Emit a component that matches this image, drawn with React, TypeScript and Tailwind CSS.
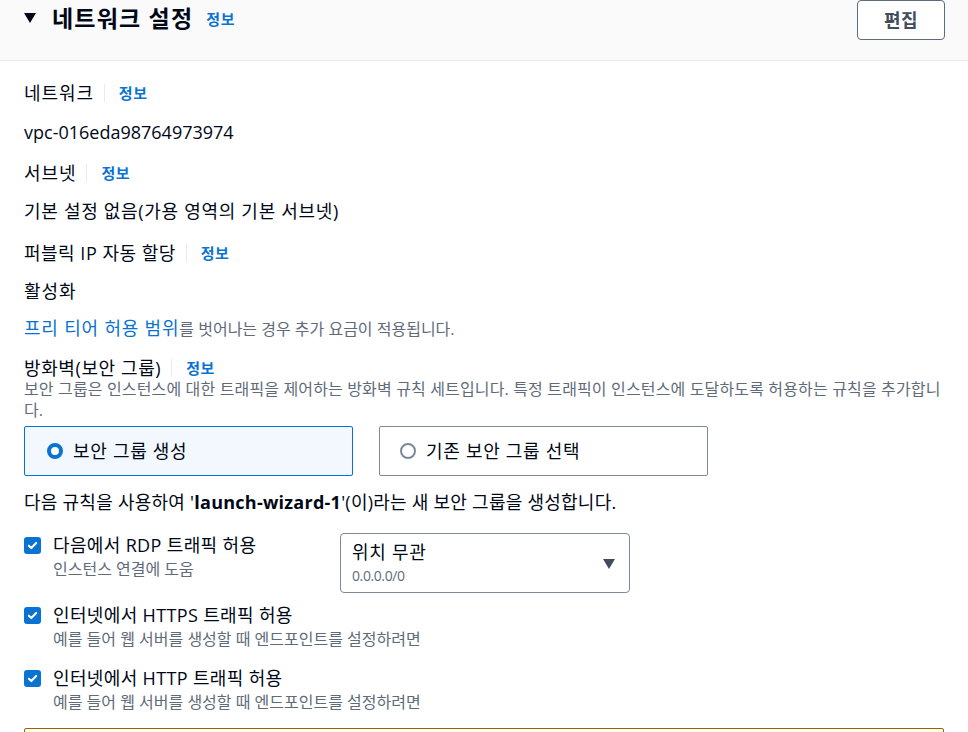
import React from "react";

const font = { fontFamily: '"Open Sans", "Noto Sans CJK KR", sans-serif' };

function Info({ gap = "ml-[10px]" }: { gap?: string }) {
  return (
    <span className={`${gap} flex items-center`}>
      <span className="h-[18px] w-px bg-[#e9ebed]" />
      <a className="ml-[14px] text-[15px] font-bold tracking-[0.5px] text-[#0972d3] leading-[22px]">정보</a>
    </span>
  );
}

function Check() {
  return (
    <span className="mt-[3px] flex h-[17px] w-[17px] shrink-0 items-center justify-center rounded-[3px] bg-[#0972d3]">
      <svg viewBox="0 0 12 12" className="h-[11px] w-[11px]" fill="none">
        <path d="M2 6.2l2.7 2.6L10 3.2" stroke="#fff" strokeWidth="2.2" strokeLinecap="round" strokeLinejoin="round" />
      </svg>
    </span>
  );
}

function CheckRow({ label, desc }: { label: string; desc: string }) {
  return (
    <div className="flex gap-3">
      <Check />
      <div>
        <div className="text-[18px] leading-[22px] tracking-[0.35px] text-[#000716]">{label}</div>
        <div className="text-[16px] leading-[20px] text-[#5f6b7a] mt-[3px]">{desc}</div>
      </div>
    </div>
  );
}

export default function App() {
  return (
    <div className="min-h-screen bg-white text-[#000716]" style={font}>
      <div className="flex h-[61px] items-start justify-between border-b border-[#e9ebed] bg-[#fafafa] pl-6 pr-[23px]">
        <div className="flex items-center pt-[4px]">
          <svg viewBox="0 0 12 10" className="h-[10px] w-[12px]">
            <path d="M0 0h12L6 10z" fill="#000716" />
          </svg>
          <h2 className="ml-4 text-[23px] font-bold leading-[28px] tracking-[1.2px]">네트워크 설정</h2>
          <a className="ml-[13px] mt-[3px] text-[15px] font-bold tracking-[0.5px] text-[#0972d3]">정보</a>
        </div>
        <button className="h-[40px] w-[88px] rounded-[4px] border border-[#5f6b7a] bg-white text-[18px] font-bold tracking-[0.5px] text-[#414d5c]">
          편집
        </button>
      </div>

      <div className="px-6 pt-[21px]">
        <div className="flex items-center leading-[22px]">
          <span className="text-[18px] tracking-[0.9px]">네트워크</span>
          <Info />
        </div>
        <div className="mt-[17px] text-[18px] leading-[22px]">vpc-016eda98764973974</div>

        <div className="mt-[19px] flex items-center leading-[22px]">
          <span className="text-[18px] tracking-[0.9px]">서브넷</span>
          <Info />
        </div>
        <div className="mt-[16px] text-[18px] leading-[22px] tracking-[0.7px]">기본 설정 없음(가용 영역의 기본 서브넷)</div>

        <div className="mt-[20px] flex items-center leading-[22px]">
          <span className="text-[18px] tracking-[0.5px]">퍼블릭 IP 자동 할당</span>
          <Info />
        </div>
        <div className="mt-[16px] text-[18px] leading-[22px] tracking-[0.9px]">활성화</div>

        <div className="mt-[15px] leading-[22px]">
          <a className="text-[18px] tracking-[0.8px] text-[#0972d3]">프리 티어 허용 범위</a>
          <span className="text-[16px] text-[#5f6b7a]">를 벗어나는 경우 추가 요금이 적용됩니다.</span>
        </div>

        <div className="mt-[17px] flex items-center leading-[22px]">
          <span className="text-[18px] tracking-[0.6px]">방화벽(보안 그룹)</span>
          <Info />
        </div>
        <div className="text-[16px] leading-[21px] tracking-[0.15px] text-[#5f6b7a]">
          <span className="whitespace-nowrap">
            보안 그룹은 인스턴스에 대한 트래픽을 제어하는 방화벽 규칙 세트입니다. 특정 트래픽이 인스턴스에 도달하도록 허용하는 규칙을 추가합니
          </span>
          <br />
          다.
        </div>

        <div className="mt-[5px] grid grid-cols-[329px_329px] gap-[26px]">
          <div className="flex h-[50px] items-center rounded-[2px] border border-[#0972d3] bg-[#f2f8fd] pl-[22px]">
            <span className="h-[16px] w-[16px] rounded-full border-[4px] border-[#0972d3] bg-white" />
            <span className="ml-[10px] text-[18px] leading-[22px] tracking-[0.7px]">보안 그룹 생성</span>
          </div>
          <div className="flex h-[50px] items-center rounded-[2px] border border-[#7d8998] bg-white pl-[20px]">
            <span className="h-[16px] w-[16px] rounded-full border-2 border-[#7d8998] bg-white" />
            <span className="ml-[10px] text-[18px] leading-[22px] tracking-[0.7px]">기존 보안 그룹 선택</span>
          </div>
        </div>

        <div className="mt-[15px] text-[18px] leading-[22px] tracking-[0.25px]">
          다음 규칙을 사용하여 '<b>launch-wizard-1</b>'(이)라는 새 보안 그룹을 생성합니다.
        </div>

        <div className="mt-[20px] grid grid-cols-[316px_290px] items-start">
          <div className="pt-[1px]">
            <CheckRow label="다음에서 RDP 트래픽 허용" desc="인스턴스 연결에 도움" />
          </div>
          <div className="relative flex h-[60px] flex-col justify-center rounded-[4px] border border-[#7d8998] pl-[11px]">
            <div className="text-[18px] leading-[22px] tracking-[0.7px]">위치 무관</div>
            <div className="mt-[4px] text-[14px] leading-[18px] tracking-[-0.4px] text-[#5f6b7a]">0.0.0.0/0</div>
            <svg viewBox="0 0 12 10" className="absolute right-[14px] top-[25px] h-[10px] w-[12px]">
              <path d="M0 0h12L6 10z" fill="#414d5c" />
            </svg>
          </div>
        </div>

        <div className="mt-[11px]">
          <CheckRow label="인터넷에서 HTTPS 트래픽 허용" desc="예를 들어 웹 서버를 생성할 때 엔드포인트를 설정하려면" />
        </div>
        <div className="mt-[18px]">
          <CheckRow label="인터넷에서 HTTP 트래픽 허용" desc="예를 들어 웹 서버를 생성할 때 엔드포인트를 설정하려면" />
        </div>

        <div className="mt-[16px] h-[60px] rounded-[2px] border border-[#8d6605] bg-[#fffce9]" />
      </div>
    </div>
  );
}
